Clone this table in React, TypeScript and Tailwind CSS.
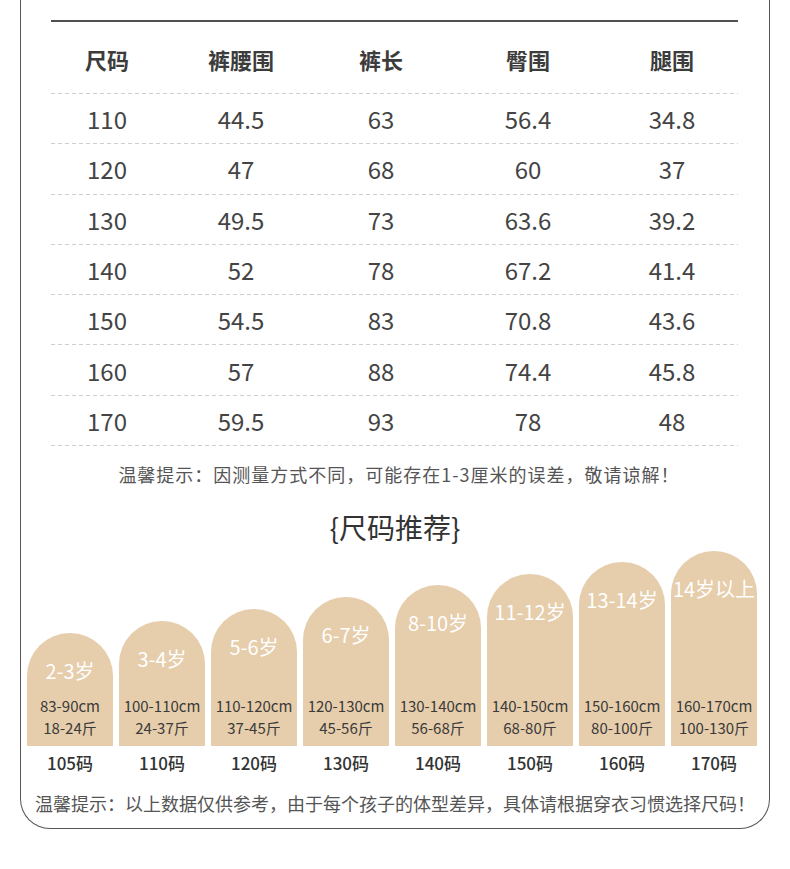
const cols = ["尺码", "裤腰围", "裤长", "臀围", "腿围"];

const rows = [
  ["110", "44.5", "63", "56.4", "34.8"],
  ["120", "47", "68", "60", "37"],
  ["130", "49.5", "73", "63.6", "39.2"],
  ["140", "52", "78", "67.2", "41.4"],
  ["150", "54.5", "83", "70.8", "43.6"],
  ["160", "57", "88", "74.4", "45.8"],
  ["170", "59.5", "93", "78", "48"],
];

const sizes = [
  { age: "2-3岁", cm: "83-90cm", jin: "18-24斤", code: "105码", h: 113 },
  { age: "3-4岁", cm: "100-110cm", jin: "24-37斤", code: "110码", h: 125 },
  { age: "5-6岁", cm: "110-120cm", jin: "37-45斤", code: "120码", h: 137 },
  { age: "6-7岁", cm: "120-130cm", jin: "45-56斤", code: "130码", h: 149 },
  { age: "8-10岁", cm: "130-140cm", jin: "56-68斤", code: "140码", h: 161 },
  { age: "11-12岁", cm: "140-150cm", jin: "68-80斤", code: "150码", h: 172 },
  { age: "13-14岁", cm: "150-160cm", jin: "80-100斤", code: "160码", h: 184 },
  { age: "14岁以上", cm: "160-170cm", jin: "100-130斤", code: "170码", h: 195 },
];

function Dash() {
  return (
    <div className="h-px w-full bg-[repeating-linear-gradient(to_right,#cfcfcf_0_4px,transparent_4px_7px)]" />
  );
}

const grid = "grid grid-cols-[112px_156px_124px_170px_118px] text-center";

export default function App() {
  return (
    <div className="min-h-[869px] bg-white font-['Noto_Sans_CJK_SC','Noto_Sans',sans-serif]">
      <div className="mx-[20px] w-[750px] rounded-b-[30px] border-x border-b border-[#555] pb-[11px]">
        <div className="pl-[30px] pr-[31px] pt-[20px]">
          <div className="h-[2px] bg-[#505050]" />
          <div className={`${grid} h-[71px] items-center pt-[3px] text-[22px] font-bold text-[#3c3c3c]`}>
            {cols.map((c) => (
              <div key={c}>{c}</div>
            ))}
          </div>
          <Dash />
          {rows.map((r) => (
            <div key={r[0]}>
              <div className={`${grid} h-[49.3px] items-center pt-[1px] text-[24px] text-[#444]`}>
                {r.map((v, i) => (
                  <div key={i}>{v}</div>
                ))}
              </div>
              <Dash />
            </div>
          ))}
        </div>

        <p className="mt-[15px] pl-[8px] text-center text-[18px] leading-[27px] tracking-[1px] text-[#555]">
          温馨提示：因测量方式不同，可能存在1-3厘米的误差，敬请谅解！
        </p>
        <h2 className="mt-[19px] text-center text-[28px] leading-[40px] text-[#333]">{"{尺码推荐}"}</h2>

        <div className="ml-[6px] mt-[4px] flex h-[195px] items-end gap-[6px]">
          {sizes.map((s) => (
            <div
              key={s.code}
              style={{ height: s.h }}
              className="flex w-[86px] flex-col justify-between rounded-t-full bg-[#e6cdab] pb-[7px] pt-[24px] text-center"
            >
              <div className="whitespace-nowrap text-[20px] leading-[28px] text-white">{s.age}</div>
              <div className="whitespace-nowrap text-[15px] leading-[22px] text-[#3a3a3a]">
                <div>{s.cm}</div>
                <div>{s.jin}</div>
              </div>
            </div>
          ))}
        </div>
        <div className="ml-[6px] mt-[5px] flex gap-[6px]">
          {sizes.map((s) => (
            <div key={s.code} className="w-[86px] text-center text-[17px] font-medium leading-[24px] text-[#333]">
              {s.code}
            </div>
          ))}
        </div>

        <p className="mt-[15px] text-center text-[18px] leading-[27px] text-[#555]">
          温馨提示：以上数据仅供参考，由于每个孩子的体型差异，具体请根据穿衣习惯选择尺码！
        </p>
      </div>
    </div>
  );
}
